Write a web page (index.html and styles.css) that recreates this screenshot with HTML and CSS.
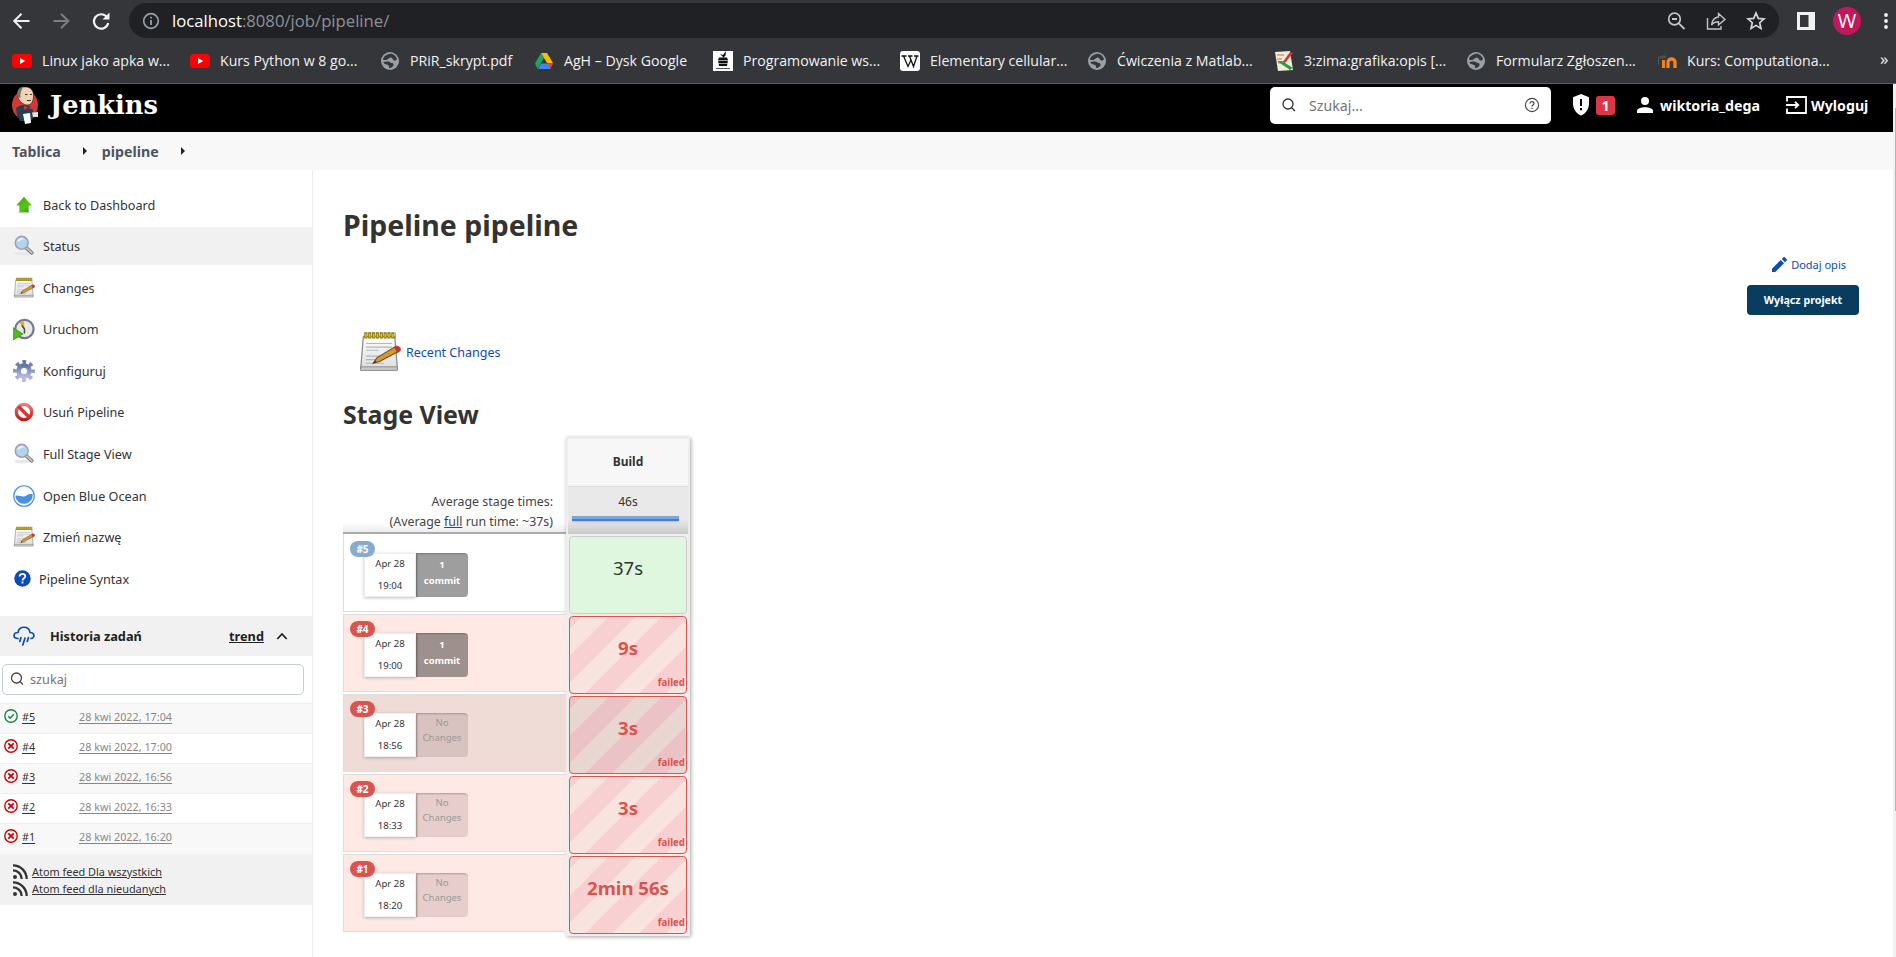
FILE: index.html
```html
<!DOCTYPE html>
<html lang="pl">
<head>
<meta charset="utf-8">
<title>pipeline [Jenkins]</title>
<link rel="stylesheet" href="styles.css">
</head>
<body>
<svg class="defs" width="0" height="0">
  <defs>
    <linearGradient id="gGreen" x1="0" y1="0" x2="1" y2="1"><stop offset="0" stop-color="#4f9a1c"/><stop offset=".6" stop-color="#55c80f"/><stop offset="1" stop-color="#2f8a0c"/></linearGradient>
    <linearGradient id="gPaper" x1="0" y1="0" x2="0" y2="1"><stop offset="0" stop-color="#fdfdfd"/><stop offset="1" stop-color="#dedede"/></linearGradient>
    <linearGradient id="gRed" x1="0" y1="0" x2="0" y2="1"><stop offset="0" stop-color="#ec7a7a"/><stop offset="1" stop-color="#cc1414"/></linearGradient>
    <linearGradient id="gGear" x1="0" y1="0" x2="0" y2="1"><stop offset="0" stop-color="#5f78a8"/><stop offset="1" stop-color="#b4b8dc"/></linearGradient>
    <symbol id="globe" viewBox="0 0 20 20"><circle cx="10" cy="10" r="9" fill="#9aa0a6"/><path d="M9 3c4-1 7 2 8 5-1 2-2.500 2-3.500 1s-1-2.500-3-2.500S8 9 6 9 3 9 3 8c1-3 3-4 6-5z" fill="#35363a"/><path d="M3.500 11c3-1 6-.5 7 .5s2.500 0 3 1.500-1.500 4-4 4c-1-.5 0-2.500-1.500-3S3.500 13 3.500 11z" fill="#35363a"/></symbol>
    <symbol id="yt" viewBox="0 0 20 16"><rect y="1" width="20" height="14" rx="3.500" fill="#f00"/><path d="M8 5l5.200 3L8 11z" fill="#fff"/></symbol>
    <symbol id="search" viewBox="0 0 24 24"><ellipse cx="11" cy="20" rx="10" ry="2" fill="#e8e8e8"/><path d="M14.500 14l6 5.500" stroke="#777" stroke-width="4" stroke-linecap="round"/><path d="M14.500 14l6 5.500" stroke="#c4c4c4" stroke-width="2.200" stroke-linecap="round"/><circle cx="9.500" cy="8.500" r="7" fill="#b4d2f2" stroke="#a0a4aa" stroke-width="1.700"/><path d="M4.500 8a5 5 0 0 1 8-4z" fill="#e3effb"/></symbol>
    <symbol id="note" viewBox="0 0 48 48"><path d="M6 6h35l3 36H3z" fill="url(#gPaper)" stroke="#8c8c8c" stroke-width="1.400"/><path d="M3 40h41v4H3z" fill="#c8c8c8" stroke="#858585"/><path d="M9 14h29M9 18h29M9 21.500h14M9 28h22M9 32h18M9 36h20" stroke="#b5b5b5" stroke-width="1.300"/><path d="M7 5h35" stroke="#8f7a10" stroke-width="7" stroke-dasharray="3.600 .7"/><path d="M8 5h33" stroke="#d8c23a" stroke-width="4" stroke-dasharray="1.700 2.600"/><path d="M17 36l4-6 20-12 4 5-21 11z" fill="#d49a35" stroke="#76501a" stroke-width="1.300"/><path d="M41 18l2-1c4 0 5 3 4 5l-3 2z" fill="#e02d2d" stroke="#a33"/><path d="M17 36l2-3 2 2z" fill="#333"/></symbol>
  </defs>
</svg>

<header class="chrome">
  <div class="toolbar">
    <svg class="nav" viewBox="0 0 20 20"><path d="M18.500 10H3.500M10.500 2.700L3.200 10l7.300 7.300" fill="none" stroke="#f1f1f1" stroke-width="2"/></svg>
    <svg class="nav" viewBox="0 0 20 20"><path d="M2.500 10h14.500M10 2.700l7.300 7.300-7.300 7.300" fill="none" stroke="#7d7e81" stroke-width="2"/></svg>
    <svg class="nav" viewBox="0 0 20 20"><path d="M16 6.200A7.200 7.200 0 1 0 17.200 12" fill="none" stroke="#f1f1f1" stroke-width="2.200"/><path d="M18.500 1.500v7h-7z" fill="#f1f1f1"/></svg>
    <div class="omnibox">
      <svg class="info" viewBox="0 0 18 18"><circle cx="9" cy="9" r="7.300" fill="none" stroke="#9aa0a6" stroke-width="1.700"/><path d="M9 8v5M9 4.800v1.800" stroke="#9aa0a6" stroke-width="1.800"/></svg>
      <span class="url"><b>localhost</b>:8080/job/pipeline/</span>
      <svg class="oi" viewBox="0 0 20 20"><circle cx="8.500" cy="8" r="5.800" fill="none" stroke="#c3c5c8" stroke-width="1.700"/><path d="M12.800 12.300l5.700 5.700M6 8h5" stroke="#c3c5c8" stroke-width="1.800"/></svg>
      <svg class="oi share" viewBox="0 0 20 20"><path d="M1.500 7v11h13.500v-3M12.500 2.500l6.500 6-6.500 5.500v-3.200c-3.500 0-5.500 1-7 3.200.5-4 3-7.500 7-8z" fill="none" stroke="#c3c5c8" stroke-width="1.400"/></svg>
      <svg class="oi" viewBox="0 0 20 20"><path d="M10 2l2.300 5.400 5.700.5-4.300 3.800 1.300 5.800-5-3.100-5 3.100 1.300-5.800L2 7.900l5.700-.5z" fill="none" stroke="#d5d6d8" stroke-width="1.700"/></svg>
    </div>
    <svg class="panel-ico" viewBox="0 0 18 18"><path d="M1.500 1.500h15v15h-15z" fill="#35363a" stroke="#f1f1f1" stroke-width="3"/><path d="M11.500 1h6v16h-6z" fill="#f1f1f1"/></svg>
    <span class="avatar">W</span>
    <svg class="dots" viewBox="0 0 6 18"><circle cx="3" cy="3" r="1.900" fill="#f1f1f1"/><circle cx="3" cy="9" r="1.900" fill="#f1f1f1"/><circle cx="3" cy="15" r="1.900" fill="#f1f1f1"/></svg>
  </div>
  <nav class="bookmarks">
    <a><svg viewBox="0 0 20 16"><use href="#yt"/></svg><span>Linux jako apka w...</span></a>
    <a><svg viewBox="0 0 20 16"><use href="#yt"/></svg><span>Kurs Python w 8 go...</span></a>
    <a><svg viewBox="0 0 20 20"><use href="#globe"/></svg><span>PRiR_skrypt.pdf</span></a>
    <a><svg viewBox="0 0 20 20"><path d="M7 2h6l6 10h-6z" fill="#fbbc04"/><path d="M7 2l3 5-6.500 11L1 12.500z" fill="#1ea362"/><path d="M4 18l3-5.500h12L16 18z" fill="#4285f4"/><path d="M14 12.500h5L16 18z" fill="#ea4335"/></svg><span>AgH – Dysk Google</span></a>
    <a><svg viewBox="0 0 20 20"><path d="M0 0h20v20H0z" fill="#fff"/><path d="M6 6.500h8l1 2.500-1 6H6L5 9zM7 3l3 1 3-4-.5 4.500-2 2z" fill="#111"/><path d="M5 9.500h10M5 12.500h10" stroke="#ddd" stroke-width=".7"/><path d="M3 17.500h14" stroke="#555"/></svg><span>Programowanie ws...</span></a>
    <a><svg viewBox="0 0 20 20"><rect width="20" height="20" rx="3" fill="#fff"/><path d="M1.500 5h5M8 5h4.500M14 5h4.500M3.500 5L8 15.500 11 9M9.500 5l4 10.500L17 5" fill="none" stroke="#111" stroke-width="1.300"/></svg><span>Elementary cellular...</span></a>
    <a><svg viewBox="0 0 20 20"><use href="#globe"/></svg><span>Ćwiczenia z Matlab...</span></a>
    <a><svg viewBox="0 0 20 20"><path d="M1 1l15-1 3 19-15 1z" fill="#f0edda"/><path d="M3 4h7M3 8h5M4 12h4" stroke="#d76a5a"/><path d="M8 12l8-11 3 1-8 10z" fill="#d33"/><path d="M3 10l13 9 3-2L8 10z" fill="#2c9c45"/></svg><span>3:zima:grafika:opis [...</span></a>
    <a><svg viewBox="0 0 20 20"><use href="#globe"/></svg><span>Formularz Zgłoszen...</span></a>
    <a><svg viewBox="0 0 20 20"><path d="M11 17v-6c0-4 7-4 7 0v6" fill="none" stroke="#ee8522" stroke-width="3.300"/><path d="M0 6l7-2 3 2-5 2z" fill="#5b4a42"/><path d="M6.500 9v8" stroke="#ee8522" stroke-width="3"/><path d="M1.500 7v7" stroke="#555"/></svg><span>Kurs: Computationa...</span></a>
    <i>»</i>
  </nav>
</header>

<div class="viewport">
<div class="page">
  <header class="jenkins">
    <svg class="butler" viewBox="0 0 27 38"><ellipse cx="13" cy="19" rx="13" ry="14.500" fill="#d33833"/><path d="M4 22c4-4 13-4 16 0l3 9-5 4H8L5 29z" fill="#263f52"/><path d="M5.500 8C5.500 2 10 .5 14.500 1S22 5 21.500 11s-3 8-6.500 8-9.500-4-9.500-11z" fill="#efd3b5" stroke="#322" stroke-width=".7"/><path d="M6 11C4 6 7 1 11.500.8 9 4 8 8 8.500 12z" fill="#77746d"/><path d="M13 8.500h2.500M18 8.500h2M15 14.500h4" stroke="#433" stroke-width="1"/><path d="M12 19.500l5 2.500 3-3.500v5l-3.500-1.500-4.500 2z" fill="#e02b2b"/><path d="M11 28l7-1 1 10-6 1z" fill="#fff"/><path d="M20 26.500l6-.5v5h-5z" fill="#e6e1dc"/></svg>
    <span class="brand">Jenkins</span>
    <div class="hsearch">
      <svg viewBox="0 0 16 16"><circle cx="7" cy="7" r="5" fill="none" stroke="#333" stroke-width="1.300"/><path d="M10.700 10.700l3.300 3.300" stroke="#333" stroke-width="1.300"/></svg>
      <span>Szukaj...</span>
      <svg viewBox="0 0 16 16"><circle cx="8" cy="8" r="6.600" fill="none" stroke="#444" stroke-width="1.100"/><path d="M6 6.500C6 4 10 4 10 6.500 10 8 8 8 8 9.500M8 10.800v1.200" fill="none" stroke="#444" stroke-width="1.200"/></svg>
    </div>
    <svg class="shield" viewBox="0 0 18 22"><path d="M9 0l8 3.200v6.300C17 15 13.500 20 9 21.500 4.500 20 1 15 1 9.500V3.200z" fill="#fff"/><path d="M9 5v7M9 14v2.200" stroke="#000" stroke-width="2"/></svg>
    <span class="count">1</span>
    <svg class="person" viewBox="0 0 16 16"><circle cx="8" cy="4" r="4" fill="#fff"/><path d="M0 16v-2c0-5 16-5 16 0v2z" fill="#fff"/></svg>
    <b class="user">wiktoria_dega</b>
    <svg class="exit" viewBox="0 0 21 18"><path d="M1 5.500V1h19v16H1v-4.500M0 9h12M9 5.800L12.300 9 9 12.200" fill="none" stroke="#fff" stroke-width="1.800"/></svg>
    <b class="logout">Wyloguj</b>
  </header>

  <div class="crumbs"><b>Tablica</b><i></i><b>pipeline</b><i></i></div>

  <div class="body">
    <aside class="side">
      <nav class="tasks">
        <a><svg viewBox="0 0 24 24"><ellipse cx="12" cy="20" rx="7" ry="1.500" fill="#ddd"/><path d="M12 3l8.500 9.500H17V20H7v-7.500H3.500z" fill="url(#gGreen)"/></svg>Back to Dashboard</a>
        <a class="active"><svg viewBox="0 0 24 24"><use href="#search"/></svg>Status</a>
        <a><svg viewBox="0 0 48 48"><use href="#note"/></svg>Changes</a>
        <a><svg viewBox="0 0 24 24"><circle cx="12.500" cy="12" r="10" fill="#e9e9e4" stroke="#77759a" stroke-width="2.400"/><path d="M12.500 12L7 5l5-1.500z" fill="#d8b11c"/><path d="M9.500 8l3 4v5" fill="none" stroke="#444" stroke-width="1.600"/><path d="M.5 10.500L11 17.500.5 24z" fill="#4fbb1d" stroke="#2c8a10" stroke-width=".7"/></svg>Uruchom</a>
        <a><svg viewBox="0 0 24 24"><circle cx="12" cy="12" r="9.800" fill="none" stroke="url(#gGear)" stroke-width="4.200" stroke-dasharray="4 3.697" stroke-dashoffset="2"/><circle cx="12" cy="12" r="5.900" fill="none" stroke="url(#gGear)" stroke-width="5"/></svg>Konfiguruj</a>
        <a><svg viewBox="0 0 24 24"><circle cx="12" cy="12" r="8.400" fill="#fff" stroke="url(#gRed)" stroke-width="3.600"/><path d="M6 6l12 12" stroke="#d93434" stroke-width="3.600"/></svg>Usuń Pipeline</a>
        <a><svg viewBox="0 0 24 24"><use href="#search"/></svg>Full Stage View</a>
        <a><svg viewBox="0 0 24 24"><circle cx="12" cy="12" r="11.200" fill="#fff" stroke="#4a90e2" stroke-width="1.300"/><path d="M2.500 12c3-1.500 6 1 9.500 .5s4-3.500 9.500-2.500A9.500 9.500 0 0 1 2.500 12z" fill="#4a90e2"/></svg>Open Blue Ocean</a>
        <a><svg viewBox="0 0 48 48"><use href="#note"/></svg>Zmień nazwę</a>
        <a class="syntax"><svg viewBox="0 0 18 18"><circle cx="9" cy="9" r="8.700" fill="#0b4cb8"/><path d="M6 6.800C6 3.200 12 3.200 12 6.600 12 8.700 9 8.600 9 11M9 12.300v2" fill="none" stroke="#fff" stroke-width="1.900"/></svg>Pipeline Syntax</a>
      </nav>

      <section class="history">
        <header>
          <svg class="cloud" viewBox="0 0 22 20"><path d="M5 12.500C-.5 12.500 0 6.500 5 6.500 6-.5 16-.5 17 6.500c5 0 5 6 1 6M8 11.500l-1.200 4M12 12l-2.200 7M15.500 11.500l-1.200 4" fill="none" stroke="#0b4cb8" stroke-width="1.700" stroke-linecap="round"/></svg>
          <b>Historia zadań</b><b class="trend">trend</b>
          <svg class="chev" viewBox="0 0 12 8"><path d="M1.300 7L6 2l4.700 5" fill="none" stroke="#222" stroke-width="1.800"/></svg>
        </header>
        <div class="hfind"><svg viewBox="0 0 14 14"><circle cx="6.500" cy="6" r="5" fill="none" stroke="#444" stroke-width="1.300"/><path d="M10 9.500l3 3" stroke="#444" stroke-width="1.300"/></svg>szukaj</div>
        <ul>
          <li><svg viewBox="0 0 14 14"><circle cx="7" cy="7" r="6.200" fill="none" stroke="#178849" stroke-width="1.400"/><path d="M4.200 7.200l2 2 3.600-4" fill="none" stroke="#178849" stroke-width="1.600"/></svg><u>#5</u><u class="date">28 kwi 2022, 17:04</u></li>
          <li><svg viewBox="0 0 14 14"><use href="#bad"/></svg><u>#4</u><u class="date">28 kwi 2022, 17:00</u></li>
          <li><svg viewBox="0 0 14 14"><use href="#bad"/></svg><u>#3</u><u class="date">28 kwi 2022, 16:56</u></li>
          <li><svg viewBox="0 0 14 14"><use href="#bad"/></svg><u>#2</u><u class="date">28 kwi 2022, 16:33</u></li>
          <li><svg viewBox="0 0 14 14"><g id="bad"><circle cx="7" cy="7" r="6.200" fill="none" stroke="#cc0003" stroke-width="1.400"/><path d="M4.300 4.300l5.400 5.400M9.700 4.300L4.300 9.700" stroke="#cc0003" stroke-width="1.800"/></g></svg><u>#1</u><u class="date">28 kwi 2022, 16:20</u></li>
        </ul>
        <footer>
          <div><svg viewBox="0 0 15 15"><g id="rss"><circle cx="2" cy="13" r="2" fill="#333"/><path d="M0 6.300A8.700 8.700 0 0 1 8.700 15M0 1.300A13.700 13.700 0 0 1 13.700 15" fill="none" stroke="#333" stroke-width="2.300"/></g></svg><u>Atom feed Dla wszystkich</u></div>
          <div><svg viewBox="0 0 15 15"><use href="#rss"/></svg><u>Atom feed dla nieudanych</u></div>
        </footer>
      </section>
    </aside>

    <main>
      <div class="actions">
        <a><svg viewBox="0 0 16 16"><path d="M0 12.500V16h3.500L12.800 6.600 9.400 3.200zM10.400 2.200l3.400 3.400 1.900-1.900c.4-.4.4-.9 0-1.200L13.500.3c-.3-.4-.8-.4-1.200 0z" fill="#0b4cb8"/></svg>Dodaj opis</a>
        <button>Wyłącz projekt</button>
      </div>
      <h1>Pipeline pipeline</h1>
      <a class="recent"><svg viewBox="0 0 48 48"><use href="#note"/></svg>Recent Changes</a>
      <h2>Stage View</h2>
      <div class="stages">
        <div class="runs">
          <div class="avg">Average stage times:<br>(Average <u>full</u> run time: ~37s)</div>
          <div class="run"><em class="ok">#5</em><div class="when"><span>Apr 28</span><span>19:04</span></div><div class="commit"><b>1</b><b>commit</b></div></div>
          <div class="run bad"><em>#4</em><div class="when"><span>Apr 28</span><span>19:00</span></div><div class="commit"><b>1</b><b>commit</b></div></div>
          <div class="run bad hover"><em>#3</em><div class="when"><span>Apr 28</span><span>18:56</span></div><div class="commit none"><span>No</span><span>Changes</span></div></div>
          <div class="run bad"><em>#2</em><div class="when"><span>Apr 28</span><span>18:33</span></div><div class="commit none"><span>No</span><span>Changes</span></div></div>
          <div class="run bad"><em>#1</em><div class="when"><span>Apr 28</span><span>18:20</span></div><div class="commit none"><span>No</span><span>Changes</span></div></div>
        </div>
        <div class="stage">
          <div class="name">Build</div>
          <div class="mean">46s<i></i></div>
          <div class="cell"><span>37s</span></div>
          <div class="cell failed"><span>9s</span><small>failed</small></div>
          <div class="cell failed hover"><span>3s</span><small>failed</small></div>
          <div class="cell failed"><span>3s</span><small>failed</small></div>
          <div class="cell failed"><span>2min 56s</span><small>failed</small></div>
        </div>
      </div>
    </main>
  </div>
</div>
<div class="scroll"><i></i></div>
</div>
</body>
</html>
```
FILE: styles.css
```css
* { box-sizing: border-box; }
body { margin: 0; width: 1896px; height: 957px; overflow: hidden; background: #fff; color: #333; font: 13px "Noto Sans", "Open Sans", sans-serif; }
svg { display: block; flex: none; }
.defs { position: absolute; }
i, em { font-style: normal; }

/* browser chrome */
.chrome { height: 84px; background: #35363a; border-bottom: 1px solid #5d5f61; color: #f1f1f1; font-family: "Open Sans", "Noto Sans", sans-serif; }
.toolbar { display: flex; align-items: center; height: 41px; padding: 0 3px 0 11px; }
.nav { width: 20px; height: 20px; margin-right: 20px; }
.nav + .nav + .nav { margin-right: 18px; }
.omnibox { display: flex; align-items: center; width: 1650px; height: 35px; padding: 0 13px; border-radius: 18px; background: #202124; color: #8e9297; font-size: 16.700px; }
.info { width: 18px; height: 18px; margin-right: 12px; }
.url { flex: 1; white-space: nowrap; line-height: 22px; }
.url b { color: #fff; font-weight: 400; }
.oi { width: 20px; height: 20px; margin-left: 20px; }
.panel-ico { width: 18px; height: 18px; margin-left: 18px; }
.avatar { width: 28px; height: 28px; margin-left: 18px; border-radius: 50%; background: #c2185b; color: #fff; font-size: 20px; line-height: 27px; text-align: center; }
.dots { width: 6px; height: 18px; margin-left: 22px; }
.bookmarks { display: grid; grid-template-columns: 178px 190px 154px 179px 187px 187px 187px 192px 191px 223px 1fr; align-items: center; height: 39px; padding-left: 12px; font-size: 14.150px; white-space: nowrap; }
.bookmarks a { display: flex; align-items: center; gap: 10px; }
.bookmarks svg { width: 20px; height: 20px; }
.bookmarks i { font-size: 17px; line-height: 20px; padding-bottom: 3px; }

/* page frame */
.viewport { display: flex; height: 873px; }
.page { width: 1893px; }
.scroll { width: 3px; background: #f1f1f1; padding-top: 24px; }
.scroll i { display: block; height: 703px; margin-left: 2px; background: #b5b5b5; }

.jenkins { display: flex; align-items: center; height: 48px; padding: 0 21px 6px 12px; background: #000; color: #fff; font-size: 14.200px; }
.butler { width: 27px; height: 38px; }
.brand { margin-left: 11px; font: bold 25.700px/36px "DejaVu Serif", serif; }
.hsearch { display: flex; align-items: center; width: 281px; height: 37px; margin-left: auto; padding: 0 11px; border-radius: 5px; background: #fff; color: #757575; }
.hsearch svg { width: 16px; height: 16px; }
.hsearch span { flex: 1; margin-left: 12px; }
.shield { width: 18px; height: 22px; margin-left: 21px; }
.count { width: 19px; height: 19px; margin-left: 6px; border-radius: 3px; background: #dc3545; font-weight: 700; line-height: 19px; text-align: center; }
.person { width: 16px; height: 16px; margin-left: 22px; }
.user { width: 120px; margin-left: 7px; }
.exit { width: 21px; height: 18px; margin-left: 6px; }
.logout { width: 61px; margin-left: 4px; }

.crumbs { display: flex; align-items: center; height: 38px; padding-left: 12px; background: #f8f8f8; color: #4d545d; font-size: 14.200px; }
.crumbs i { margin: 0 15px 0 22px; border: 4px solid transparent; border-left-color: #222; border-right: 0; }

.body { display: flex; height: 787px; }
.side { width: 313px; border-right: 1px solid #eee; }
.tasks { padding-top: 15.500px; }
.tasks a { display: flex; align-items: center; gap: 8px; height: 38px; margin-bottom: 3.600px; padding-left: 13px; font-size: 12.650px; }
.tasks svg { width: 22px; height: 22px; }
.tasks .active { background: #f1f1f1; }
.tasks .syntax svg { width: 17px; height: 17px; margin-left: 1px; }

.history header { display: flex; align-items: center; height: 40px; margin-top: 15.500px; padding-left: 13px; background: #f1f1f1; font-size: 12.750px; color: #222; }
.history { padding-top: 2.400px; margin-top: -3.600px; }
.tasks a:last-child { margin-bottom: 3.600px; }
.cloud { width: 22px; height: 20px; margin-right: 15px; }
.history header b { width: 179px; }
.history header .trend { width: 47px; text-decoration: underline; }
.chev { width: 12px; height: 8px; }
.hfind { display: flex; align-items: center; gap: 6px; width: 302px; height: 31px; margin: 8px 0 8px 2px; padding-left: 7px; border: 1px solid #c3ccd3; border-radius: 5px; color: #757575; font-size: 12.700px; }
.hfind svg { width: 14px; height: 14px; }
.history ul { margin: 0; padding: 0; list-style: none; font-size: 10.800px; }
.history li { display: flex; height: 30.200px; padding: 5px 0 0 4px; border-top: 1px solid #eee; }
.history li:nth-child(odd) { background: #f8f8f8; }
.history li svg { width: 14px; height: 14px; margin-right: 4px; }
.history li u { width: 57px; line-height: 16px; text-underline-offset: 2px; }
.history li .date { width: auto; color: #888; }
.history footer { height: 51px; padding: 9px 0 0 13px; background: #f1f1f1; font-size: 10.900px; }
.history footer div { display: flex; align-items: center; gap: 4px; height: 17px; }
.history footer svg { width: 15px; height: 15px; }

/* main panel */
main { position: relative; width: 1580px; padding: 34px 0 0 30px; }
h1 { margin: 0; font-size: 28.500px; line-height: 42px; }
h2 { margin: 0; font-size: 24.900px; line-height: 34px; }
.actions { position: absolute; right: 34px; top: 84px; display: flex; flex-direction: column; align-items: flex-end; color: #0b4cb8; font-size: 11px; }
.actions a { display: flex; align-items: center; gap: 4px; height: 20px; margin-right: 13px; }
.actions svg { width: 15px; height: 15px; }
.actions button { width: 112px; height: 30px; margin-top: 11px; padding: 0; border: 0; border-radius: 4px; background: #083d5f; color: #fff; font: bold 10.700px "Noto Sans", sans-serif; }
.recent { display: flex; align-items: center; gap: 5px; height: 44px; margin: 84px 0 23px 15px; color: #0b4cb8; font-size: 12.500px; }
.recent svg { width: 43px; height: 43px; }

.stages { display: flex; padding-top: 6px; }
.runs { width: 223px; padding-top: 49px; }
.avg { height: 48px; padding: 6px 13px 0 0; border-bottom: 2px solid #aaa; background: linear-gradient(#fff 80%, #ececec); color: #444; font-size: 12.400px; line-height: 20px; text-align: right; }
.run { position: relative; display: flex; height: 78px; margin-bottom: 2px; padding: 19px 0 0 20px; border: solid #ddd; border-width: 1px 0 1px 1px; }
.avg + .run { border-top: 0; }
.run.bad { background: #ffe9e4; }
.run.bad { padding-top: 18px; }
.run.hover { background: #efdcd6; }
.run em { position: absolute; left: 6px; top: 6px; width: 25px; height: 16px; border-radius: 8px; background: #d9534f; color: #fff; font-size: 10px; font-weight: 700; line-height: 16px; text-align: center; }
.run .ok { top: 7px; background: #86aad0; }
.when { width: 52px; height: 44px; padding-top: 2px; background: #fff; border: 1px solid #eee; box-shadow: 0 1px 3px rgba(0,0,0,.25); font-size: 9.600px; text-align: center; }
.when span { display: block; line-height: 16px; margin-bottom: 6px; }
.commit { width: 52px; height: 44px; padding-top: 4px; border-radius: 0 4px 4px 0; background: rgba(0,0,0,.38); box-shadow: inset 1px 1px 2px rgba(0,0,0,.25); color: #fff; font-size: 9.500px; text-align: center; }
.commit b { display: block; line-height: 16px; }
.commit.none { padding-top: 2px; background: rgba(70,30,50,.13); color: #999; }
.commit.none span { display: block; line-height: 15px; }
.stage { width: 124px; height: 499px; padding: 2px; background: #eee; box-shadow: 1px 1px 4px rgba(0,0,0,.35); }
.name { height: 48px; background: #f7f7f7; border-bottom: 1px solid #ddd; font-weight: 700; font-size: 12px; line-height: 46px; text-align: center; }
.mean { height: 47px; margin-bottom: 2px; padding: 6px 4px 0; background: linear-gradient(#e9e9e9 70%, #c9c9c9); font-size: 12px; line-height: 18px; text-align: center; }
.mean i { display: block; width: 107px; height: 5px; margin-top: 5px; background: linear-gradient(#7ea6d6 60%, #4a7dcb 60%); box-shadow: 0 1px 2px rgba(0,0,0,.2); }
.cell { position: relative; height: 78px; margin: 0 1px 2px; border: 1px solid #ccc; border-radius: 4px; background: #def7de; font-size: 18.600px; text-align: center; line-height: 62px; }
.cell span { display: block; }
.failed { border-color: #d9534f; background: repeating-linear-gradient(135deg, #f8d0d2 0 8px, #f8e3de 8px 27px, #f8d0d2 27px 38px); color: #d9534f; font-weight: 700; }
.failed.hover { background: repeating-linear-gradient(135deg, #ebc3c6 0 8px, #ead6d0 8px 27px, #ebc3c6 27px 38px); }
.cell small { position: absolute; right: 1px; bottom: 3px; font-size: 9.700px; line-height: 14px; }
```
